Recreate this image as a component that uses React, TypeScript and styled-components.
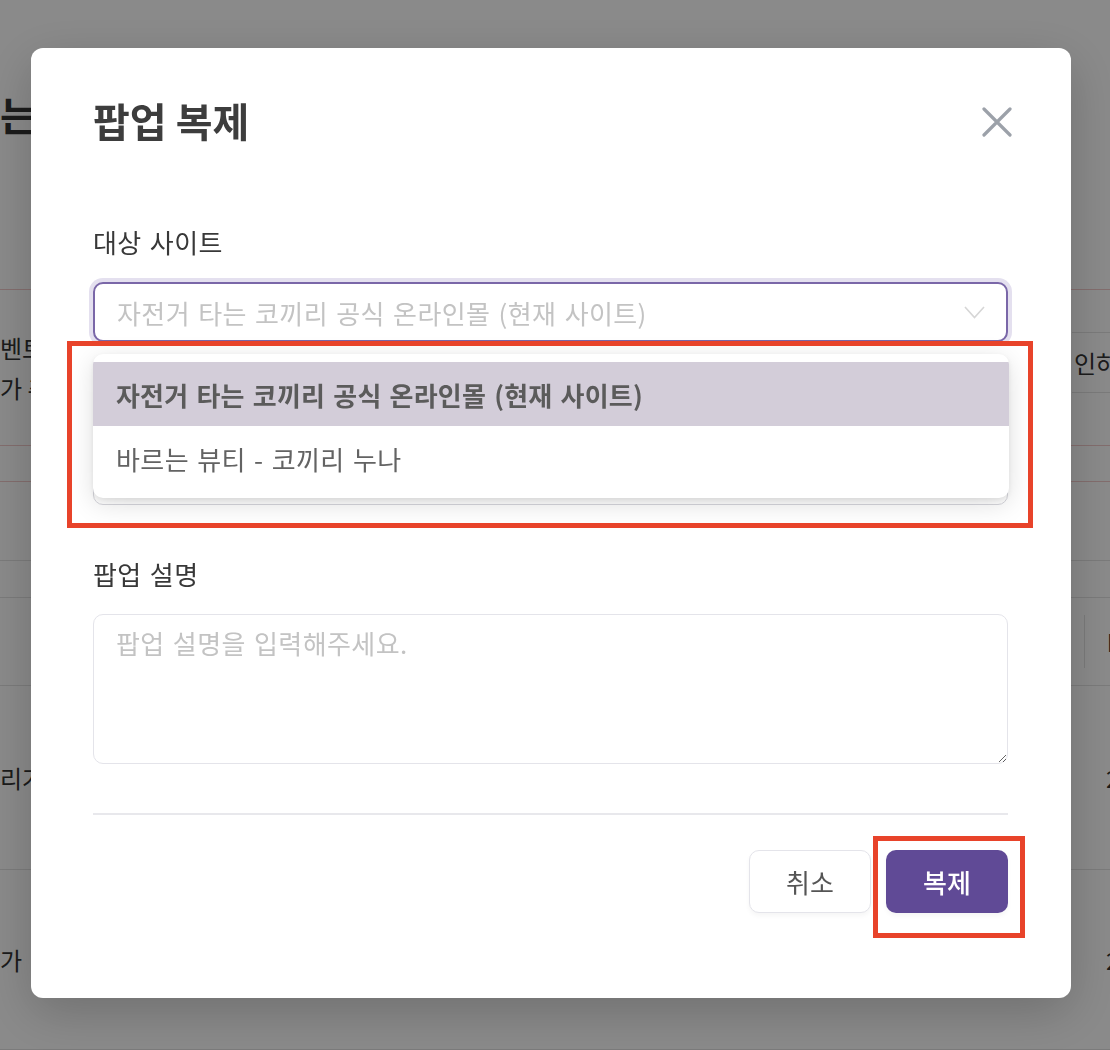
import React from "react";
import styled, { createGlobalStyle } from "styled-components";

const FONT = `"Noto Sans CJK KR", "Noto Sans", sans-serif`;

const GlobalStyle = createGlobalStyle`
  html, body { margin: 0; padding: 0; }
  body { font-family: ${FONT}; background: #fff; }
  * { box-sizing: border-box; }
`;

/* ---------- background page (behind the dimmed overlay) ---------- */
const Page = styled.div`
  width: 1110px;
  height: 1050px;
  overflow: hidden;
  background: #fff;
  color: #333;
  display: flex;
  flex-direction: column;
`;

const PageTitle = styled.h1`
  margin: 0;
  padding-top: 90px;
  height: 292px;
  font-size: 40px;
  font-weight: 700;
  line-height: 48px;
  color: #333;
  white-space: nowrap;
`;

const Table = styled.div`
  display: flex;
  flex-direction: column;
  border-top: 1px solid #f2caca;
`;

const Row = styled.div<{ $h: number; $pink?: boolean }>`
  height: ${(p) => p.$h}px;
  display: grid;
  grid-template-columns: 1072px 1fr;
  align-items: center;
  border-bottom: 1px solid ${(p) => (p.$pink ? "#f2caca" : "#e3e3e3")};
  font-size: 24px;
  line-height: 40px;
  white-space: nowrap;
  overflow: hidden;
`;

const Cell = styled.div`
  white-space: nowrap;
`;

const GhostButton = styled.div`
  height: 61px;
  border-top: 1px solid #e3e3e3;
  border-bottom: 1px solid #e3e3e3;
  display: flex;
  align-items: center;
  padding-left: 2px;
  margin-top: -10px;
`;

const HeadCell = styled.div`
  height: 53px;
  margin-left: 12px;
  border-left: 1px solid #e3e3e3;
  padding-left: 22px;
  display: flex;
  align-items: center;
  font-weight: 700;
`;

const NumCell = styled.div`
  padding-left: 34px;
`;

/* ---------- overlay + modal ---------- */
const Overlay = styled.div`
  position: fixed;
  inset: 0;
  background: rgba(0, 0, 0, 0.46);
  padding: 48px 0 0 31px;
`;

const Modal = styled.div`
  position: relative;
  width: 1040px;
  height: 950px;
  background: #fff;
  border-radius: 12px;
  box-shadow: 0 14px 50px rgba(0, 0, 0, 0.2);
  padding: 48px 63px 0 62px;
  display: flex;
  flex-direction: column;
  font-family: ${FONT};
`;

const Header = styled.div`
  height: 48px;
  display: flex;
  align-items: center;
  justify-content: space-between;
`;

const Title = styled.h2`
  margin: 0;
  font-size: 40px;
  line-height: 48px;
  font-weight: 700;
  color: #3d3d3d;
`;

const CloseButton = styled.button`
  width: 30px;
  height: 30px;
  margin: 3px -4px 0 0;
  padding: 0;
  border: 0;
  background: none;
  color: #9ca1a9;
  display: flex;
  cursor: pointer;
`;

const Field = styled.div<{ $top: number }>`
  position: relative;
  display: flex;
  flex-direction: column;
  gap: 22px;
  margin-top: ${(p) => p.$top}px;
  letter-spacing: 0.4px;
  word-spacing: 2px;
`;

const Label = styled.label`
  font-size: 26px;
  line-height: 36px;
  color: #383838;
`;

const SelectBox = styled.div`
  height: 60px;
  border: 2px solid #7a67a8;
  border-radius: 10px;
  box-shadow: 0 0 0 4px #e4e0ef;
  background: #fff;
  display: flex;
  align-items: center;
  justify-content: space-between;
  padding: 0 21px 0 22px;
  font-size: 26px;
  color: #c3c3c3;
  white-space: nowrap;
`;

const Chevron = styled.svg`
  width: 21px;
  height: 13px;
  color: #d6d6d6;
`;

const Menu = styled.ul`
  position: absolute;
  left: 0;
  right: -1px;
  top: calc(100% + 12px);
  margin: 0;
  padding: 8px 0;
  list-style: none;
  background: #fff;
  border-radius: 10px;
  box-shadow: 0 6px 26px rgba(0, 0, 0, 0.13), 0 2px 5px rgba(0, 0, 0, 0.07);
  overflow: hidden;
  z-index: 5;
`;

const Option = styled.li<{ $selected?: boolean }>`
  height: 64px;
  display: flex;
  align-items: center;
  padding: 0 23px;
  font-size: 26px;
  white-space: nowrap;
  color: ${(p) => (p.$selected ? "#5b5b5b" : "#636363")};
  font-weight: ${(p) => (p.$selected ? 700 : 400)};
  letter-spacing: ${(p) => (p.$selected ? "0.2px" : "0.4px")};
  background: ${(p) => (p.$selected ? "#d3cdd9" : "transparent")};
`;

const TextInput = styled.input`
  height: 60px;
  width: 100%;
  border: 1.5px solid #d6d6dc;
  border-radius: 10px;
  padding: 0 22px;
  font-family: inherit;
  font-size: 26px;
  color: #333;
  outline: none;
  &::placeholder {
    color: #c3c3c3;
  }
`;

const TextArea = styled.textarea`
  display: block;
  width: 100%;
  height: 150px;
  border: 1.5px solid #e4e4ea;
  border-radius: 10px;
  padding: 8px 22px;
  font-family: inherit;
  font-size: 26px;
  line-height: 39px;
  letter-spacing: inherit;
  word-spacing: inherit;
  color: #333;
  resize: vertical;
  outline: none;
  &::placeholder {
    color: #c3c3c3;
  }
`;

const Divider = styled.hr`
  margin: 49px 0 0;
  height: 2px;
  border: 0;
  background: #e8e8ec;
`;

const Footer = styled.div`
  margin-top: 35px;
  display: flex;
  justify-content: flex-end;
  gap: 15px;
`;

const Button = styled.button<{ $primary?: boolean }>`
  width: 122px;
  height: 63px;
  border-radius: 10px;
  font-family: inherit;
  font-size: 26px;
  font-weight: ${(p) => (p.$primary ? 500 : 400)};
  border: ${(p) => (p.$primary ? "none" : "1.5px solid #e4e4ea")};
  background: ${(p) => (p.$primary ? "#604a96" : "#fff")};
  color: ${(p) => (p.$primary ? "#fff" : "#555")};
  box-shadow: 0 3px 5px rgba(0, 0, 0, 0.04);
  cursor: pointer;
`;

const DropdownHighlight = styled.div`
  position: absolute;
  left: 36px;
  top: 293px;
  width: 966px;
  height: 187px;
  border: 5px solid #e8432a;
  pointer-events: none;
  z-index: 10;
`;

const ButtonHighlight = styled.div`
  position: absolute;
  left: 842px;
  top: 788px;
  width: 152px;
  height: 102px;
  border: 5px solid #e8432a;
  pointer-events: none;
  z-index: 10;
`;

const SITE_CURRENT = "자전거 타는 코끼리 공식 온라인몰 (현재 사이트)";

export default function App() {
  return (
    <>
      <GlobalStyle />
      <Page>
        <PageTitle>는</PageTitle>
        <Table>
          <Row $h={156} $pink>
            <Cell>
              <div>벤트</div>
              <div>가 추</div>
            </Cell>
            <GhostButton>인하</GhostButton>
          </Row>
          <Row $h={36} $pink />
          <Row $h={79} />
          <Row $h={37} />
          <Row $h={88}>
            <Cell />
            <HeadCell>I</HeadCell>
          </Row>
          <Row $h={184}>
            <Cell>리가</Cell>
            <NumCell>2</NumCell>
          </Row>
          <Row $h={180}>
            <Cell>가 ㅣ</Cell>
            <NumCell>2</NumCell>
          </Row>
        </Table>
      </Page>

      <Overlay>
        <Modal>
          <Header>
            <Title>팝업 복제</Title>
            <CloseButton aria-label="닫기">
              <svg width="30" height="30" viewBox="0 0 30 30" fill="none">
                <path
                  d="M2 2 L28 28 M28 2 L2 28"
                  stroke="currentColor"
                  strokeWidth="3.2"
                  strokeLinecap="round"
                />
              </svg>
            </CloseButton>
          </Header>

          <Field $top={80}>
            <Label>대상 사이트</Label>
            <SelectBox>
              <span>{SITE_CURRENT}</span>
              <Chevron viewBox="0 0 21 13" fill="none">
                <path d="M1 1 L10.5 11.5 L20 1" stroke="currentColor" strokeWidth="1.6" />
              </Chevron>
            </SelectBox>
            <Menu>
              <Option $selected>{SITE_CURRENT}</Option>
              <Option>바르는 뷰티 - 코끼리 누나</Option>
            </Menu>
          </Field>

          <Field $top={45}>
            <Label>팝업 제목</Label>
            <TextInput placeholder="팝업 제목을 입력해주세요." />
          </Field>

          <Field $top={51}>
            <Label>팝업 설명</Label>
            <TextArea placeholder="팝업 설명을 입력해주세요." />
          </Field>

          <Divider />

          <Footer>
            <Button>취소</Button>
            <Button $primary>복제</Button>
          </Footer>

          <DropdownHighlight />
          <ButtonHighlight />
        </Modal>
      </Overlay>
    </>
  );
}
